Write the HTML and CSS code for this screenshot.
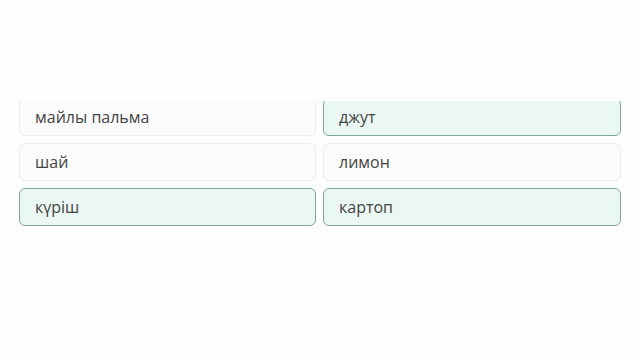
FILE: index.html
```html
<!DOCTYPE html>
<html lang="kk">
<head>
<meta charset="utf-8">
<link rel="stylesheet" href="styles.css">
</head>
<body>
<div class="page">
  <div class="viewport">
    <div class="grid">
      <div class="card">майлы пальма</div>
      <div class="card selected">джут</div>
      <div class="card">шай</div>
      <div class="card">лимон</div>
      <div class="card selected">күріш</div>
      <div class="card selected">картоп</div>
    </div>
  </div>
</div>
</body>
</html>
```
FILE: styles.css
```css
html, body {
  margin: 0;
  padding: 0;
  background: #fdfdfd;
}
.page {
  width: 640px;
  height: 360px;
  padding-top: 101px;
  box-sizing: border-box;
}
.viewport {
  overflow: hidden;
  height: 140px;
  padding: 0 19px;
}
.grid {
  margin-top: -3px;
  display: grid;
  grid-template-columns: 297px 298px;
  column-gap: 7px;
  row-gap: 7px;
  grid-auto-rows: 38px;
}
.card {
  box-sizing: border-box;
  display: flex;
  align-items: center;
  padding-left: 15px;
  border: 1px solid #ececec;
  border-radius: 6px;
  background: #fbfbfb;
  font-family: "Open Sans", "Noto Sans", sans-serif;
  font-size: 16px;
  color: #444;
}
.card.selected {
  border: 1.5px solid #7ea496;
  background: #eaf7f2;
}
```
